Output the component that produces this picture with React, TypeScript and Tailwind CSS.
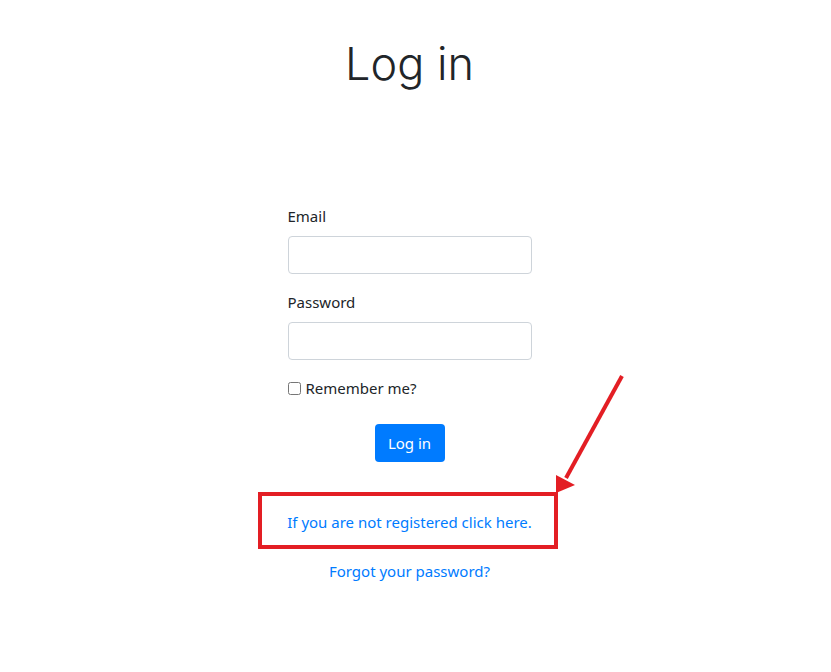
import React from "react";

export default function App() {
  return (
    <div className="relative w-[831px] h-[672px] bg-white overflow-hidden" style={{ fontFamily: '"Noto Sans", "Open Sans", sans-serif' }}>
      <div className="w-[819px] flex flex-col items-center text-[15px] text-[#212529]">
        <h1 className="mt-[35px] text-[45px] leading-[58px] font-light text-[#212529]" style={{ fontFamily: 'Inter, "Noto Sans", sans-serif' }}>
          Log in
        </h1>
        <form className="mt-[111px] w-[244px] flex flex-col">
          <label className="leading-6 mb-2">Email</label>
          <input className="h-[38px] w-full border border-[#ced4da] rounded-[4px] mb-4 px-3 outline-none" />
          <label className="leading-6 mb-2">Password</label>
          <input type="password" className="h-[38px] w-full border border-[#ced4da] rounded-[4px] mb-4 px-3 outline-none" />
          <label className="flex items-center leading-6 h-6">
            <input type="checkbox" className="w-[13px] h-[13px] mr-[5px]" />
            Remember me?
          </label>
          <div className="flex justify-center mt-6">
            <button type="button" className="h-[38px] w-[70px] rounded-[4px] bg-[#007bff] text-white leading-6">
              Log in
            </button>
          </div>
        </form>
        <a className="mt-[48px] leading-6 text-[#007bff]">If you are not registered click here.</a>
        <a className="mt-[25px] leading-6 text-[#007bff]">Forgot your password?</a>
      </div>
      <svg className="absolute left-0 top-0 pointer-events-none" width="831" height="672">
        <rect x="260" y="494" width="296" height="53" fill="none" stroke="#e31e24" strokeWidth="4" />
        <line x1="622" y1="376" x2="566" y2="478" stroke="#e31e24" strokeWidth="4" />
        <polygon points="556,475 575,485 556,493" fill="#e31e24" />
      </svg>
    </div>
  );
}
